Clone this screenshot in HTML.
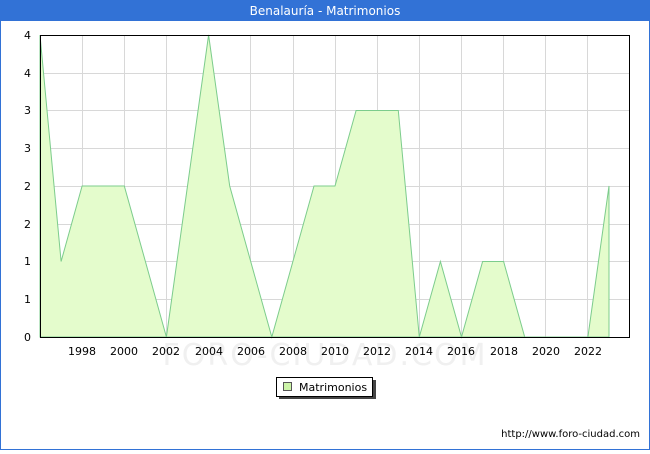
<!DOCTYPE html>
<html><head><meta charset="utf-8"><style>
body{margin:0;width:650px;height:450px;overflow:hidden;background:#fff;font-family:"DejaVu Sans","Liberation Sans",sans-serif}
</style></head><body>
<svg width="650" height="450" xmlns="http://www.w3.org/2000/svg" font-family="DejaVu Sans, Liberation Sans, sans-serif">
<rect x="0" y="0" width="650" height="450" fill="#fff"/>
<rect x="0.5" y="0.5" width="649" height="449" fill="none" stroke="#3272d6"/>
<rect x="0" y="0" width="650" height="21" fill="#3272d6"/>
<text x="325" y="15" fill="#fff" font-size="12" text-anchor="middle">Benalauría - Matrimonios</text>
<g stroke="#d8d8d8" stroke-width="1">
<line x1="40" y1="73.5" x2="630" y2="73.5"/><line x1="40" y1="110.5" x2="630" y2="110.5"/><line x1="40" y1="148.5" x2="630" y2="148.5"/><line x1="40" y1="186.5" x2="630" y2="186.5"/><line x1="40" y1="224.5" x2="630" y2="224.5"/><line x1="40" y1="261.5" x2="630" y2="261.5"/><line x1="40" y1="299.5" x2="630" y2="299.5"/>
<line x1="82.5" y1="35" x2="82.5" y2="337"/><line x1="124.5" y1="35" x2="124.5" y2="337"/><line x1="166.5" y1="35" x2="166.5" y2="337"/><line x1="208.5" y1="35" x2="208.5" y2="337"/><line x1="250.5" y1="35" x2="250.5" y2="337"/><line x1="293.5" y1="35" x2="293.5" y2="337"/><line x1="335.5" y1="35" x2="335.5" y2="337"/><line x1="377.5" y1="35" x2="377.5" y2="337"/><line x1="419.5" y1="35" x2="419.5" y2="337"/><line x1="461.5" y1="35" x2="461.5" y2="337"/><line x1="503.5" y1="35" x2="503.5" y2="337"/><line x1="545.5" y1="35" x2="545.5" y2="337"/><line x1="587.5" y1="35" x2="587.5" y2="337"/>
</g>
<text x="325" y="365" font-size="30" fill="#f0f0f0" text-anchor="middle" letter-spacing="2">FORO-CIUDAD.COM</text>
<polygon fill="#e4fccc" stroke="#7ccc8c" stroke-width="1" points="40,337 40,35 61.1,261.5 82.1,186 103.2,186 124.3,186 145.4,261.5 166.4,337 187.5,186 208.6,35 229.7,186 250.7,261.5 271.8,337 292.9,261.5 314,186 335,186 356.1,110.5 377.2,110.5 398.3,110.5 419.3,337 440.4,261.5 461.5,337 482.6,261.5 503.6,261.5 524.7,337 545.8,337 566.9,337 587.9,337 609,186 609,337"/>
<rect x="40.5" y="35.5" width="589" height="302" fill="none" stroke="#000"/>
<g font-size="11" fill="#000" text-anchor="end">
<text x="31" y="39">4</text><text x="31" y="77">4</text><text x="31" y="114">3</text><text x="31" y="152">3</text><text x="31" y="190">2</text><text x="31" y="228">2</text><text x="31" y="265">1</text><text x="31" y="303">1</text><text x="31" y="341">0</text>
</g>
<g font-size="11" fill="#000" text-anchor="middle">
<text x="82" y="355">1998</text><text x="124" y="355">2000</text><text x="166" y="355">2002</text><text x="209" y="355">2004</text><text x="251" y="355">2006</text><text x="293" y="355">2008</text><text x="335" y="355">2010</text><text x="377" y="355">2012</text><text x="419" y="355">2014</text><text x="461" y="355">2016</text><text x="504" y="355">2018</text><text x="546" y="355">2020</text><text x="588" y="355">2022</text>
</g>
<rect x="279" y="380" width="97" height="19" fill="#444"/>
<rect x="276.5" y="377.5" width="96" height="19" fill="#fff" stroke="#000"/>
<rect x="283.5" y="382.5" width="8" height="8" fill="#ccf4a8" stroke="#555"/>
<text x="299" y="391" font-size="11">Matrimonios</text>
<text x="640" y="437" font-size="10" text-anchor="end">http://www.foro-ciudad.com</text>
</svg>
</body></html>
